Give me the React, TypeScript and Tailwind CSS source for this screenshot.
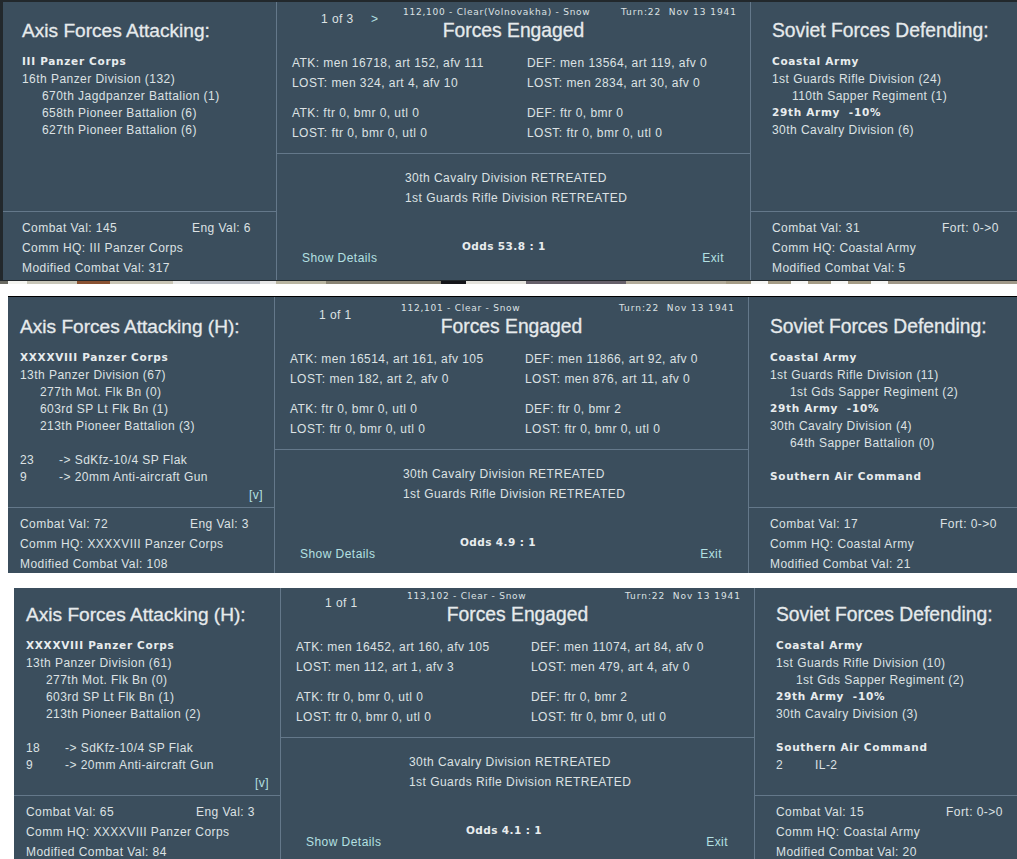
const BODY = "font-['Liberation_Sans',Arial,sans-serif] text-[12px] tracking-[0.45px] text-[#dde2e4]";
const BOLD = "font-['DejaVu_Sans',Verdana,sans-serif] font-bold text-[10.5px] tracking-[0.7px] text-[#e8ecee]";
const ODDS = "font-['DejaVu_Sans',Verdana,sans-serif] font-bold text-[10.5px] tracking-[0.4px] text-[#e8ecee]";
const TITLE = "font-['Liberation_Sans',Arial,sans-serif] text-[19.3px] leading-[26px] text-[#e6eaec] [-webkit-text-stroke:0.3px_#e6eaec]";
const AXIS_TITLE = "font-['Liberation_Sans',Arial,sans-serif] text-[19.1px] leading-[26px] text-[#e6eaec] [-webkit-text-stroke:0.3px_#e6eaec]";
const SMALL = "font-['DejaVu_Sans',Verdana,sans-serif] text-[9px] tracking-[0.75px] text-[#dde2e4]";
const TURN = "font-['DejaVu_Sans',Verdana,sans-serif] text-[9px] tracking-[0.95px] text-[#dde2e4]";
const LINK = "font-['Liberation_Sans',Arial,sans-serif] text-[12px] tracking-[0.45px] text-[#b4e0e2]";

type Row =
  | { kind: "bold" | "plain" | "sub" | "blank"; text?: string }
  | { kind: "tally"; count: string; text: string };

type PanelData = {
  outer: string;
  leftWidth: string;
  leftPad: string;
  titlePad: string;
  topHeight: string;
  centerHeight: string;
  headerShift: string;
  axisTitle: string;
  axis: Row[];
  showV?: boolean;
  soviet: Row[];
  page: string;
  arrow?: boolean;
  hex: string;
  forces: string[];
  odds: string;
  axisVals: string[];
  sovietVals: string[];
};

const RowList = ({ rows }: { rows: Row[] }) => (
  <div className="mt-[9px] flex flex-col">
    {rows.map((row, i) => {
      if (row.kind === "tally")
        return (
          <div key={i} className={`flex h-[17px] items-center ${BODY}`}>
            <span className="w-[39px]">{row.count}</span>
            <span>{row.text}</span>
          </div>
        );
      if (row.kind === "bold")
        return (
          <div key={i} className={`flex h-[17px] items-center whitespace-pre ${BOLD}`}>
            {row.text}
          </div>
        );
      if (row.kind === "sub")
        return (
          <div key={i} className={`flex h-[17px] items-center pl-[20px] ${BODY}`}>
            {row.text}
          </div>
        );
      return (
        <div key={i} className={`flex h-[17px] items-center ${BODY}`}>
          {row.text}
        </div>
      );
    })}
  </div>
);

const Vals = ({ vals }: { vals: string[] }) => (
  <div className={`flex h-[68px] flex-col pt-[6px] ${BODY}`}>
    <div className="flex h-[20px] shrink-0 items-center">
      <span className="w-[170px]">{vals[0]}</span>
      <span>{vals[1]}</span>
    </div>
    <div className="flex h-[20px] shrink-0 items-center">{vals[2]}</div>
    <div className="flex h-[20px] shrink-0 items-center">{vals[3]}</div>
  </div>
);

const Panel = ({ p }: { p: PanelData }) => (
  <div className={`flex shrink-0 overflow-hidden bg-[#3b4e5d] ${p.outer}`}>
    {/* axis column */}
    <div className={`flex shrink-0 flex-col ${p.leftWidth}`}>
      <div className={`flex shrink-0 flex-col ${p.leftPad} ${p.topHeight} ${p.titlePad}`}>
        <div className={AXIS_TITLE}>{p.axisTitle}</div>
        <RowList rows={p.axis} />
        {p.showV && (
          <div className={`mt-[1px] self-end pr-[11px] ${LINK}`}>[v]</div>
        )}
      </div>
      <div className={`min-h-0 flex-1 border-t border-[#64788a] ${p.leftPad}`}>
        <Vals vals={p.axisVals} />
      </div>
    </div>

    {/* center column */}
    <div className="flex w-[475px] shrink-0 flex-col border-x border-[#64788a]">
      <div className={`flex shrink-0 flex-col ${p.centerHeight}`}>
        <div className={`flex h-[18px] shrink-0 pl-[44px] ${p.headerShift}`}>
          <span className={`mt-[8px] w-[50px] ${BODY}`}>{p.page}</span>
          <span className={`mt-[8px] w-[32px] ${LINK}`}>{p.arrow ? ">" : ""}</span>
          <span className={`mt-[4px] w-[218px] ${SMALL}`}>{p.hex}</span>
          <span className={`mt-[4px] ${TURN}`}>Turn:22&nbsp; Nov 13 1941</span>
        </div>
        <div className={`-mt-[2px] text-center ${TITLE}`}>Forces Engaged</div>
        <div className={`mt-[9px] grid grid-cols-[235px_1fr] pl-[15px] ${BODY}`}>
          {p.forces.map((line, i) => (
            <div
              key={i}
              className={`flex h-[20px] items-center ${i === 4 || i === 5 ? "mt-[10px]" : ""}`}
            >
              {line}
            </div>
          ))}
        </div>
      </div>
      <div className="flex min-h-0 flex-1 flex-col border-t border-[#64788a]">
        <div className={`flex shrink-0 flex-col pl-[128px] pt-[14px] ${BODY}`}>
          <div className="flex h-[20px] items-center">30th Cavalry Division RETREATED</div>
          <div className="flex h-[20px] items-center">1st Guards Rifle Division RETREATED</div>
        </div>
        <div className={`mt-[29px] flex h-[20px] shrink-0 items-center pl-[185px] ${ODDS}`}>
          {p.odds}
        </div>
        <div className={`-mt-[8px] flex shrink-0 items-center justify-between pl-[25px] pr-[26px] ${LINK}`}>
          <span>Show Details</span>
          <span>Exit</span>
        </div>
      </div>
    </div>

    {/* soviet column */}
    <div className="flex min-w-0 flex-1 flex-col">
      <div className={`flex shrink-0 flex-col pl-[21px] ${p.topHeight} ${p.titlePad}`}>
        <div className={`whitespace-nowrap ${TITLE}`}>Soviet Forces Defending:</div>
        <RowList rows={p.soviet} />
      </div>
      <div className="min-h-0 flex-1 border-t border-[#64788a] pl-[21px]">
        <Vals vals={p.sovietVals} />
      </div>
    </div>
  </div>
);

const panels: PanelData[] = [
  {
    outer: "h-[280px] border-y border-l-[3px] border-[#22282c]",
    leftWidth: "w-[273px]",
    leftPad: "pl-[19px]",
    titlePad: "pt-[16px]",
    topHeight: "h-[209px]",
    centerHeight: "h-[151px]",
    headerShift: "",
    axisTitle: "Axis Forces Attacking:",
    axis: [
      { kind: "bold", text: "III Panzer Corps" },
      { kind: "plain", text: "16th Panzer Division (132)" },
      { kind: "sub", text: "670th Jagdpanzer Battalion (1)" },
      { kind: "sub", text: "658th Pioneer Battalion (6)" },
      { kind: "sub", text: "627th Pioneer Battalion (6)" },
    ],
    soviet: [
      { kind: "bold", text: "Coastal Army" },
      { kind: "plain", text: "1st Guards Rifle Division (24)" },
      { kind: "sub", text: "110th Sapper Regiment (1)" },
      { kind: "bold", text: "29th Army  -10%" },
      { kind: "plain", text: "30th Cavalry Division (6)" },
    ],
    page: "1 of 3",
    arrow: true,
    hex: "112,100 - Clear(Volnovakha) - Snow",
    forces: [
      "ATK: men 16718, art 152, afv 111", "DEF: men 13564, art 119, afv 0",
      "LOST: men 324, art 4, afv 10", "LOST: men 2834, art 30, afv 0",
      "ATK: ftr 0, bmr 0, utl 0", "DEF: ftr 0, bmr 0",
      "LOST: ftr 0, bmr 0, utl 0", "LOST: ftr 0, bmr 0, utl 0",
    ],
    odds: "Odds 53.8 : 1",
    axisVals: ["Combat Val: 145", "Eng Val: 6", "Comm HQ: III Panzer Corps", "Modified Combat Val: 317"],
    sovietVals: ["Combat Val: 31", "Fort: 0->0", "Comm HQ: Coastal Army", "Modified Combat Val: 5"],
  },
  {
    outer: "h-[277px] ml-[8px] border-t border-black",
    leftWidth: "w-[266px]",
    leftPad: "pl-[12px]",
    titlePad: "pt-[17px]",
    topHeight: "h-[210px]",
    centerHeight: "h-[152px]",
    headerShift: "mt-[1px]",
    axisTitle: "Axis Forces Attacking (H):",
    axis: [
      { kind: "bold", text: "XXXXVIII Panzer Corps" },
      { kind: "plain", text: "13th Panzer Division (67)" },
      { kind: "sub", text: "277th Mot. Flk Bn (0)" },
      { kind: "sub", text: "603rd SP Lt Flk Bn (1)" },
      { kind: "sub", text: "213th Pioneer Battalion (3)" },
      { kind: "blank", text: "" },
      { kind: "tally", count: "23", text: "-> SdKfz-10/4 SP Flak" },
      { kind: "tally", count: "9", text: "-> 20mm Anti-aircraft Gun" },
    ],
    showV: true,
    soviet: [
      { kind: "bold", text: "Coastal Army" },
      { kind: "plain", text: "1st Guards Rifle Division (11)" },
      { kind: "sub", text: "1st Gds Sapper Regiment (2)" },
      { kind: "bold", text: "29th Army  -10%" },
      { kind: "plain", text: "30th Cavalry Division (4)" },
      { kind: "sub", text: "64th Sapper Battalion (0)" },
      { kind: "blank", text: "" },
      { kind: "bold", text: "Southern Air Command" },
    ],
    page: "1 of 1",
    hex: "112,101 - Clear - Snow",
    forces: [
      "ATK: men 16514, art 161, afv 105", "DEF: men 11866, art 92, afv 0",
      "LOST: men 182, art 2, afv 0", "LOST: men 876, art 11, afv 0",
      "ATK: ftr 0, bmr 0, utl 0", "DEF: ftr 0, bmr 2",
      "LOST: ftr 0, bmr 0, utl 0", "LOST: ftr 0, bmr 0, utl 0",
    ],
    odds: "Odds 4.9 : 1",
    axisVals: ["Combat Val: 72", "Eng Val: 3", "Comm HQ: XXXXVIII Panzer Corps", "Modified Combat Val: 108"],
    sovietVals: ["Combat Val: 17", "Fort: 0->0", "Comm HQ: Coastal Army", "Modified Combat Val: 21"],
  },
  {
    outer: "h-[271px] ml-[14px]",
    leftWidth: "w-[266px]",
    leftPad: "pl-[12px]",
    titlePad: "pt-[14px]",
    topHeight: "h-[207px]",
    centerHeight: "h-[149px]",
    headerShift: "-mt-[2px]",
    axisTitle: "Axis Forces Attacking (H):",
    axis: [
      { kind: "bold", text: "XXXXVIII Panzer Corps" },
      { kind: "plain", text: "13th Panzer Division (61)" },
      { kind: "sub", text: "277th Mot. Flk Bn (0)" },
      { kind: "sub", text: "603rd SP Lt Flk Bn (1)" },
      { kind: "sub", text: "213th Pioneer Battalion (2)" },
      { kind: "blank", text: "" },
      { kind: "tally", count: "18", text: "-> SdKfz-10/4 SP Flak" },
      { kind: "tally", count: "9", text: "-> 20mm Anti-aircraft Gun" },
    ],
    showV: true,
    soviet: [
      { kind: "bold", text: "Coastal Army" },
      { kind: "plain", text: "1st Guards Rifle Division (10)" },
      { kind: "sub", text: "1st Gds Sapper Regiment (2)" },
      { kind: "bold", text: "29th Army  -10%" },
      { kind: "plain", text: "30th Cavalry Division (3)" },
      { kind: "blank", text: "" },
      { kind: "bold", text: "Southern Air Command" },
      { kind: "tally", count: "2", text: "IL-2" },
    ],
    page: "1 of 1",
    hex: "113,102 - Clear - Snow",
    forces: [
      "ATK: men 16452, art 160, afv 105", "DEF: men 11074, art 84, afv 0",
      "LOST: men 112, art 1, afv 3", "LOST: men 479, art 4, afv 0",
      "ATK: ftr 0, bmr 0, utl 0", "DEF: ftr 0, bmr 2",
      "LOST: ftr 0, bmr 0, utl 0", "LOST: ftr 0, bmr 0, utl 0",
    ],
    odds: "Odds 4.1 : 1",
    axisVals: ["Combat Val: 65", "Eng Val: 3", "Comm HQ: XXXXVIII Panzer Corps", "Modified Combat Val: 84"],
    sovietVals: ["Combat Val: 15", "Fort: 0->0", "Comm HQ: Coastal Army", "Modified Combat Val: 20"],
  },
];

// sliver of the map that shows under the first panel
const MapStrip = () => (
  <div className="flex h-[3px] shrink-0">
    <div className="w-[8px] bg-[#6a6a62]" />
    <div className="w-[19px] bg-[#f4f4f0]" />
    <div className="w-[50px] bg-[#c8c6b8]" />
    <div className="w-[33px] bg-[#8a5232]" />
    <div className="w-[63px] bg-[#c9c5b5]" />
    <div className="w-[17px] bg-[#e8e8e8]" />
    <div className="w-[70px] bg-[#b8bcc4]" />
    <div className="w-[16px] bg-[#e6e6e6]" />
    <div className="w-[50px] bg-[#b9b5a1]" />
    <div className="w-[115px] bg-[#8a8474]" />
    <div className="w-[25px] bg-[#15151a]" />
    <div className="w-[60px] bg-[#e4e2dc]" />
    <div className="w-[100px] bg-[#66606a]" />
    <div className="w-[100px] bg-[#b2ab9a]" />
    <div className="w-[25px] bg-[#a59c86]" />
    <div className="w-[17px] bg-[#f6f6f4]" />
    <div className="w-[23px] bg-[#a59c86]" />
    <div className="w-[17px] bg-[#f6f6f4]" />
    <div className="w-[23px] bg-[#a59c86]" />
    <div className="w-[17px] bg-[#f6f6f4]" />
    <div className="w-[23px] bg-[#a59c86]" />
    <div className="w-[17px] bg-[#f6f6f4]" />
    <div className="flex-1 bg-[#a09888]" />
  </div>
);

export default function App() {
  return (
    <div className="flex h-[859px] w-[1017px] flex-col overflow-hidden bg-white">
      <div className="h-[1px] shrink-0 bg-[#22282c]" />
      <Panel p={panels[0]} />
      <MapStrip />
      <div className="h-[12px] shrink-0" />
      <Panel p={panels[1]} />
      <div className="h-[15px] shrink-0" />
      <Panel p={panels[2]} />
    </div>
  );
}
